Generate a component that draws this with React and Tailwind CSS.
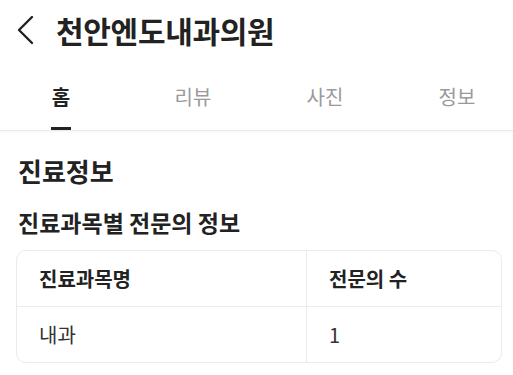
export default function App() {
  const tabs = ["홈", "리뷰", "사진", "정보"];
  return (
    <div className="w-[513px] h-[375px] bg-white overflow-hidden text-[#222]" style={{ fontFamily: '"Noto Sans CJK KR", "Noto Sans", sans-serif' }}>
      {/* Header */}
      <div className="flex items-center h-[60px] pl-[16px]">
        <svg width="20" height="30" viewBox="0 0 20 30" className="shrink-0">
          <polyline points="16,2 3,15 16,28" fill="none" stroke="#222" strokeWidth="2.4" strokeLinecap="round" strokeLinejoin="round" />
        </svg>
        <h1 className="ml-[20px] text-[30px] font-bold leading-none tracking-[-0.3px]">천안엔도내과의원</h1>
      </div>

      {/* Tabs */}
      <div className="flex pl-[16px] gap-[42px] h-[71px] border-b border-[#ebebeb] shadow-[0_1px_2px_rgba(0,0,0,0.04)]">
        {tabs.map((t, i) => (
          <div key={t} className="w-[90px] flex flex-col items-center justify-end">
            <span className={i === 0 ? "text-[20px] font-bold text-[#222] leading-none mb-[20px]" : "text-[20px] text-[#9a9a9a] leading-none mb-[20px]"}>{t}</span>
            <div className={i === 0 ? "w-[20px] h-[3px] bg-[#222]" : "w-[20px] h-[3px] bg-transparent"} />
          </div>
        ))}
      </div>

      {/* Content */}
      <div className="pl-[16px] pr-[11px]">
        <h2 className="mt-[27px] ml-[2px] text-[26px] font-bold leading-none">진료정보</h2>
        <h3 className="mt-[27px] ml-[2px] text-[23px] font-bold leading-none">진료과목별 전문의 정보</h3>
        <div className="mt-[16px] border border-[#ebebeb] rounded-[10px] overflow-hidden">
          <div className="grid grid-cols-[290px_1fr] border-b border-[#ebebeb]">
            <div className="h-[55px] flex items-center pl-[22px] text-[20px] font-bold border-r border-[#ebebeb]">진료과목명</div>
            <div className="h-[55px] flex items-center pl-[22px] text-[20px] font-bold">전문의 수</div>
          </div>
          <div className="grid grid-cols-[290px_1fr]">
            <div className="h-[55px] flex items-center pl-[22px] text-[20px] text-[#333] border-r border-[#ebebeb]">내과</div>
            <div className="h-[55px] flex items-center pl-[22px] text-[20px] text-[#333]">1</div>
          </div>
        </div>
      </div>
    </div>
  );
}
